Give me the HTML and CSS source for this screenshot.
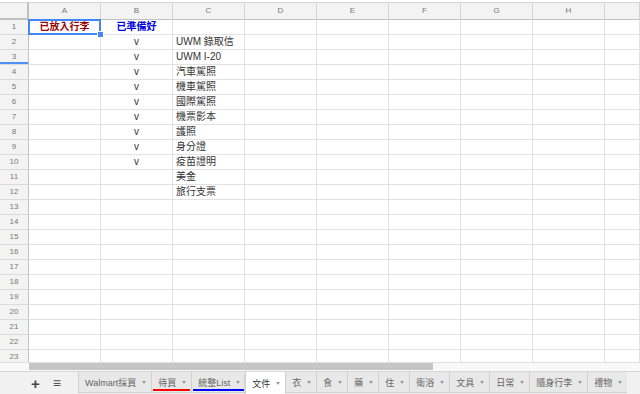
FILE: index.html
```html
<!DOCTYPE html>
<html lang="zh-Hant">
<head>
    <meta charset="UTF-8">
    <meta name="viewport" content="width=device-width, initial-scale=1.0">
    <title>出國行李清單</title>
    <link rel="stylesheet" href="styles.css">
</head>
<body>
    <div class="sheet" id="sheet"></div>

    <div class="scrollbar">
        <div class="scroll-corner"></div>
        <div class="scroll-track"><div class="scroll-thumb"></div></div>
    </div>

    <div class="tabbar">
        <div class="tab-tools">
            <span class="tool-add">+</span>
            <span class="tool-list">≡</span>
        </div>
        <div class="tab">Walmart採買<span class="arrow"></span></div>
        <div class="tab tab-red">待買<span class="arrow"></span></div>
        <div class="tab tab-blue">統整List<span class="arrow"></span></div>
        <div class="tab active">文件<span class="arrow"></span></div>
        <div class="tab">衣<span class="arrow"></span></div>
        <div class="tab">食<span class="arrow"></span></div>
        <div class="tab">藥<span class="arrow"></span></div>
        <div class="tab">住<span class="arrow"></span></div>
        <div class="tab">衛浴<span class="arrow"></span></div>
        <div class="tab">文具<span class="arrow"></span></div>
        <div class="tab">日常<span class="arrow"></span></div>
        <div class="tab">隨身行李<span class="arrow"></span></div>
        <div class="tab">禮物<span class="arrow"></span></div>
    </div>

    <script>
        const columns = ['A', 'B', 'C', 'D', 'E', 'F', 'G', 'H', ''];
        const rowCount = 23;

        // 每一列: [A, B, C]
        const data = {
            1: ['已放入行李', '已準備好', ''],
            2: ['', 'v', 'UWM 錄取信'],
            3: ['', 'v', 'UWM I-20'],
            4: ['', 'v', '汽車駕照'],
            5: ['', 'v', '機車駕照'],
            6: ['', 'v', '國際駕照'],
            7: ['', 'v', '機票影本'],
            8: ['', 'v', '護照'],
            9: ['', 'v', '身分證'],
            10: ['', 'v', '疫苗證明'],
            11: ['', '', '美金'],
            12: ['', '', '旅行支票']
        };

        const sheet = document.getElementById('sheet');

        const corner = document.createElement('div');
        corner.className = 'corner';
        sheet.appendChild(corner);

        columns.forEach(name => {
            const head = document.createElement('div');
            head.className = 'col-head';
            head.textContent = name;
            sheet.appendChild(head);
        });

        for (let r = 1; r <= rowCount; r++) {
            const rowHead = document.createElement('div');
            rowHead.className = 'row-head';
            if (r === 3) rowHead.classList.add('resize');
            rowHead.textContent = r;
            sheet.appendChild(rowHead);

            const values = data[r] || [];
            columns.forEach((name, c) => {
                const cell = document.createElement('div');
                cell.className = 'cell';
                if (c === 1) cell.classList.add('center');
                if (r === 1 && c === 0) cell.classList.add('title-red', 'selected');
                if (r === 1 && c === 1) cell.classList.add('title-blue');
                cell.textContent = values[c] || '';
                sheet.appendChild(cell);
            });
        }
    </script>
</body>
</html>
```

FILE: styles.css
```css
body {
    margin: 0;
    width: 640px;
    height: 394px;
    overflow: hidden;
    background-color: #ffffff;
    font-family: 'Liberation Sans', 'Noto Sans CJK TC', sans-serif;
    color: #222222;
}

.sheet {
    display: grid;
    grid-template-columns: 29px repeat(8, 72px) 1fr;
    grid-template-rows: 17px;
    grid-auto-rows: 15px;
    height: 360px;
    margin-top: 2px;
    overflow: hidden;
    border-top: 1px solid #d4d4d4;
    box-sizing: border-box;
}

.corner, .col-head, .row-head, .cell {
    box-sizing: border-box;
    white-space: nowrap;
    overflow: hidden;
}

.corner {
    background-color: #f3f3f3;
    border-right: 2px solid #c0c0c0;
    border-bottom: 2px solid #c0c0c0;
}

.col-head {
    background-color: #f3f3f3;
    border-right: 1px solid #d4d4d4;
    border-bottom: 1px solid #c0c0c0;
    color: #777777;
    font-size: 8px;
    line-height: 16px;
    text-align: center;
}

.row-head {
    position: relative;
    background-color: #f3f3f3;
    border-right: 1px solid #c0c0c0;
    border-bottom: 1px solid #dadada;
    color: #777777;
    font-size: 8px;
    line-height: 14px;
    text-align: center;
}

.row-head.resize::after {
    content: '';
    position: absolute;
    left: 0;
    right: -1px;
    bottom: -1px;
    height: 3px;
    background-color: #4d90fe;
}

.cell {
    position: relative;
    border-right: 1px solid #e2e2e2;
    border-bottom: 1px solid #e2e2e2;
    font-size: 10px;
    line-height: 14px;
    padding: 0 3px;
    color: #333333;
}

.center {
    text-align: center;
}

.title-red {
    color: #990000;
    font-weight: bold;
    text-align: center;
}

.title-blue {
    color: #0000dd;
    font-weight: bold;
    text-align: center;
}

.selected {
    overflow: visible;
}

.selected::after {
    content: '';
    position: absolute;
    top: -1px;
    left: -1px;
    right: -1px;
    bottom: -1px;
    border: 2px solid #4285f4;
}

.selected::before {
    content: '';
    position: absolute;
    right: -4px;
    bottom: -4px;
    width: 5px;
    height: 5px;
    background-color: #4285f4;
    border: 1px solid #ffffff;
    z-index: 2;
}

.scrollbar {
    display: flex;
    height: 8px;
    background-color: #f8f8f8;
    border-top: 1px solid #e0e0e0;
}

.scroll-corner {
    width: 29px;
    background-color: #f8f8f8;
}

.scroll-track {
    flex: 1;
}

.scroll-thumb {
    width: 404px;
    height: 7px;
    background-color: #c6c6c6;
}

.tabbar {
    display: flex;
    align-items: flex-start;
    height: 25px;
    overflow: hidden;
    background-color: #f1f1f1;
    border-top: 1px solid #d6d6d6;
    box-sizing: border-box;
}

.tab-tools {
    display: flex;
    align-items: center;
    flex-shrink: 0;
    width: 78px;
    height: 22px;
}

.tool-add {
    margin-left: 31px;
    font-size: 15px;
    color: #444444;
    font-weight: bold;
}

.tool-list {
    margin-left: 13px;
    font-size: 14px;
    color: #555555;
    font-weight: bold;
}

.tab {
    display: flex;
    align-items: center;
    flex-shrink: 0;
    gap: 6px;
    height: 21px;
    padding: 0 5px 0 6px;
    box-sizing: border-box;
    background-color: #e8e8e8;
    border-left: 1px solid #d0d0d0;
    border-bottom: 1px solid #d0d0d0;
    font-size: 9px;
    white-space: nowrap;
    color: #666666;
    position: relative;
}

.tab.active {
    background-color: #ffffff;
    color: #333333;
    height: 22px;
    border-bottom: none;
    box-shadow: 0 1px 2px #bbbbbb;
}

.arrow {
    width: 0;
    height: 0;
    border-left: 2.5px solid transparent;
    border-right: 2.5px solid transparent;
    border-top: 3px solid #999999;
}

.tab-red::after, .tab-blue::after {
    content: '';
    position: absolute;
    left: 1px;
    right: 1px;
    bottom: 1px;
    height: 2px;
}

.tab-red::after {
    background-color: #ff0000;
}

.tab-blue::after {
    background-color: #0000ff;
}
```
